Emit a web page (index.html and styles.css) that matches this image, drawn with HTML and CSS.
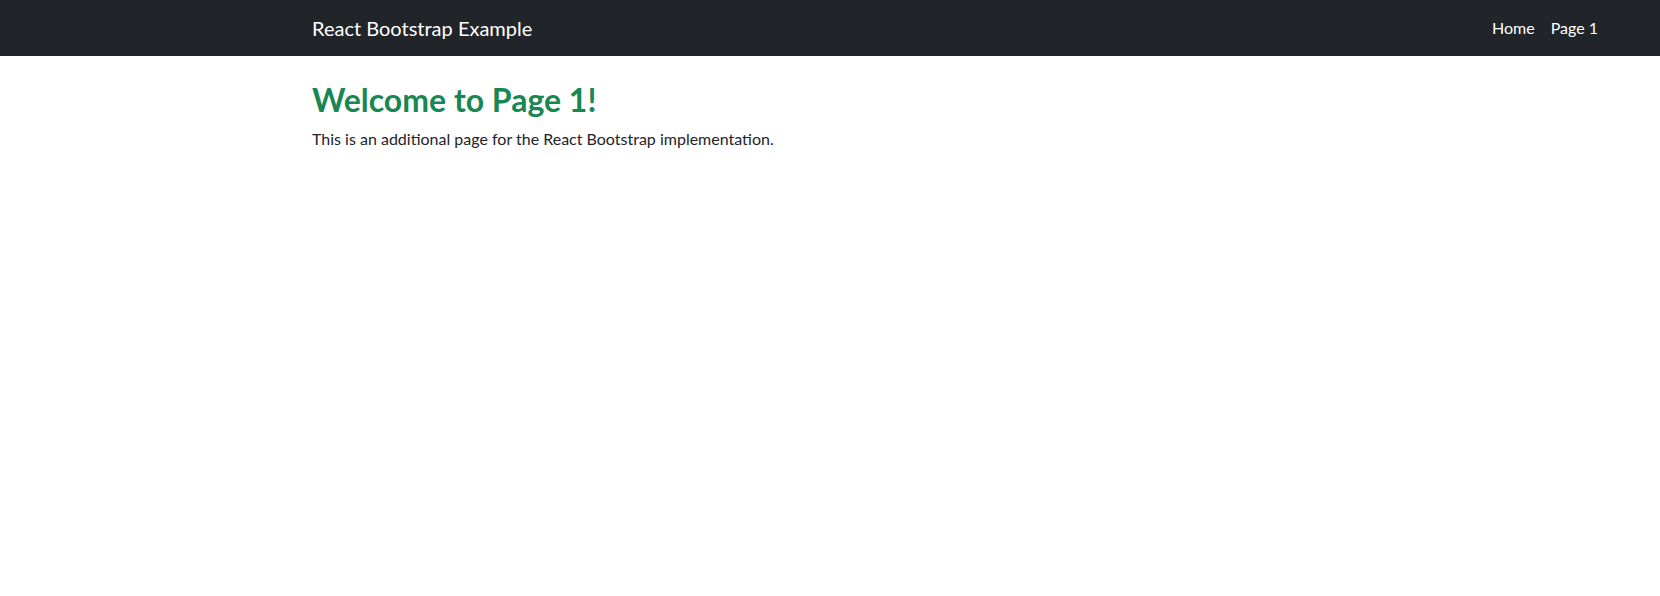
FILE: index.html
```html
<!DOCTYPE html>
<html lang="en">
<head>
<meta charset="utf-8">
<title>React Bootstrap Example</title>
<link rel="stylesheet" href="styles.css">
</head>
<body>
<nav class="navbar">
  <div class="container navbar-inner">
    <a class="brand" href="#">React Bootstrap Example</a>
    <div class="nav">
      <a class="nav-link" href="#">Home</a>
      <a class="nav-link" href="#">Page 1</a>
    </div>
  </div>
</nav>
<main class="container main">
  <h2 class="title">Welcome to Page 1!</h2>
  <p class="lead-text">This is an additional page for the React Bootstrap implementation.</p>
</main>
</body>
</html>
```
FILE: styles.css
```css
* { box-sizing: border-box; }
html, body { margin: 0; padding: 0; }
body {
  font-family: Lato, "Noto Sans", sans-serif;
  font-size: 16px;
  line-height: 1.5;
  color: #212529;
  background: #fff;
}
.container {
  width: 1318px;
  margin-left: 300px;
  padding: 0 12px;
}
.navbar {
  background: #212529;
  padding: 8px 0;
}
.navbar-inner {
  display: flex;
  align-items: center;
  justify-content: space-between;
}
.brand {
  color: #fff;
  text-decoration: none;
  font-size: 20px;
  line-height: 30px;
  padding: 5px 0;
}
.nav { display: flex; }
.nav-link {
  color: #fff;
  text-decoration: none;
  padding: 8px;
  line-height: 24px;
}
.main { padding-top: 25px; }
.title {
  margin: 0 0 8px;
  font-size: 32px;
  line-height: 1.2;
  font-weight: 700;
  color: #198754;
}
.lead-text { margin: 0; }
```
